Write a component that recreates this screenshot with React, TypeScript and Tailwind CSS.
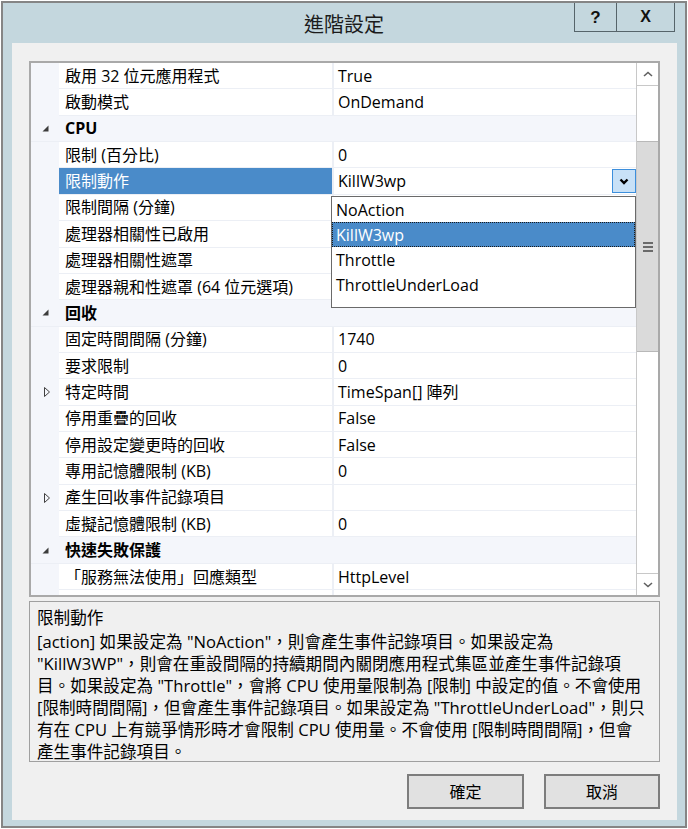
import React from "react";

type Row = {
  k: "cat" | "prop";
  name: string;
  value?: string;
  exp?: boolean;
  sel?: boolean;
};

const rows: Row[] = [
  { k: "prop", name: "啟用 32 位元應用程式", value: "True" },
  { k: "prop", name: "啟動模式", value: "OnDemand" },
  { k: "cat", name: "CPU" },
  { k: "prop", name: "限制 (百分比)", value: "0" },
  { k: "prop", name: "限制動作", value: "KillW3wp", sel: true },
  { k: "prop", name: "限制間隔 (分鐘)", value: "" },
  { k: "prop", name: "處理器相關性已啟用", value: "" },
  { k: "prop", name: "處理器相關性遮罩", value: "" },
  { k: "prop", name: "處理器親和性遮罩 (64 位元選項)", value: "" },
  { k: "cat", name: "回收" },
  { k: "prop", name: "固定時間間隔 (分鐘)", value: "1740" },
  { k: "prop", name: "要求限制", value: "0" },
  { k: "prop", name: "特定時間", value: "TimeSpan[] 陣列", exp: true },
  { k: "prop", name: "停用重疊的回收", value: "False" },
  { k: "prop", name: "停用設定變更時的回收", value: "False" },
  { k: "prop", name: "專用記憶體限制 (KB)", value: "0" },
  { k: "prop", name: "產生回收事件記錄項目", value: "", exp: true },
  { k: "prop", name: "虛擬記憶體限制 (KB)", value: "0" },
  { k: "cat", name: "快速失敗保護" },
  { k: "prop", name: "「服務無法使用」回應類型", value: "HttpLevel" },
  { k: "prop", name: "已啟用", value: "" },
];

function CatArrow() {
  return (
    <svg width="7" height="7" viewBox="0 0 7 7" className="block">
      <polygon points="6.5,0.5 6.5,6.5 0.5,6.5" fill="#3c3c3c" />
    </svg>
  );
}

function ExpArrow() {
  return (
    <svg width="6" height="10" viewBox="0 0 6 10" className="block">
      <polygon points="0.5,0.5 5.5,5 0.5,9.5" fill="none" stroke="#404040" strokeWidth="1" />
    </svg>
  );
}

function GridRow({ r }: { r: Row }) {
  if (r.k === "cat") {
    return (
      <div className="flex h-[26.37px] shrink-0 items-center bg-[#f4f6fb] border-b border-[#eceff5]">
        <div className="flex w-[28px] shrink-0 justify-end pr-[10px]">
          <CatArrow />
        </div>
        <div className="pl-[6px] font-bold text-black">{r.name}</div>
      </div>
    );
  }
  return (
    <div className="flex h-[26.37px] shrink-0">
      <div className="flex w-[28px] shrink-0 items-center justify-end bg-[#f4f6fb] pr-[9px]">
        {r.exp ? <ExpArrow /> : null}
      </div>
      <div
        className={
          r.sel
            ? "flex w-[273px] shrink-0 items-center border-b border-[#eceff5] bg-[#4a8bc9] pl-[6px] text-white whitespace-nowrap"
            : "flex w-[273px] shrink-0 items-center border-b border-[#eceff5] bg-white pl-[6px] text-black whitespace-nowrap"
        }
      >
        {r.name}
      </div>
      <div className="flex flex-1 items-center border-b border-l-2 border-[#eceff5] bg-white pl-[4px] text-black whitespace-nowrap">
        <span className="flex-1">{r.value}</span>
        {r.sel ? (
          <div className="mr-0 flex h-[24px] w-[24px] items-center justify-center border border-[#3d8fdc] bg-[#c8e1f7]">
            <svg width="10" height="7" viewBox="0 0 10 7">
              <polyline points="1.5,1.5 5,5 8.5,1.5" fill="none" stroke="#000" strokeWidth="2.4" />
            </svg>
          </div>
        ) : null}
      </div>
    </div>
  );
}

function Dropdown() {
  const items = ["NoAction", "KillW3wp", "Throttle", "ThrottleUnderLoad"];
  return (
    <div className="absolute left-[300px] top-[133px] h-[112px] w-[305px] border border-[#6a6a6a] bg-white">
      {items.map((it) =>
        it === "KillW3wp" ? (
          <div
            key={it}
            className="flex h-[25px] items-center border border-dotted border-[#1a1a1a] bg-[#4a8bc9] pl-[3px] text-white"
          >
            {it}
          </div>
        ) : (
          <div key={it} className="flex h-[25px] items-center pl-[4px] text-black">
            {it}
          </div>
        )
      )}
    </div>
  );
}

function Scrollbar() {
  return (
    <div className="flex w-[22px] shrink-0 flex-col border-l border-[#c8c8c8] bg-white">
      <div className="flex h-[23px] shrink-0 items-center justify-center border-b border-[#c8c8c8]">
        <svg width="10" height="6" viewBox="0 0 10 6">
          <polyline points="1,5 5,1.5 9,5" fill="none" stroke="#606060" strokeWidth="1.6" />
        </svg>
      </div>
      <div className="h-[55px] shrink-0" />
      <div className="flex h-[211px] shrink-0 flex-col items-center justify-center gap-[2px] border-y border-[#b8b8b8] bg-[#dadada]">
        <div className="h-[2px] w-[10px] bg-[#6a6a6a]" />
        <div className="h-[2px] w-[10px] bg-[#6a6a6a]" />
        <div className="h-[2px] w-[10px] bg-[#6a6a6a]" />
      </div>
      <div className="flex-1" />
      <div className="flex h-[22px] shrink-0 items-center justify-center border-t border-[#c8c8c8]">
        <svg width="10" height="6" viewBox="0 0 10 6">
          <polyline points="1,1 5,4.5 9,1" fill="none" stroke="#606060" strokeWidth="1.6" />
        </svg>
      </div>
    </div>
  );
}

export default function App() {
  return (
    <div className="h-[829px] w-[688px] bg-white p-[1px] font-['Open_Sans','Noto_Sans_CJK_TC',sans-serif] text-[16px] leading-none">
      <div className="flex h-full flex-col border-2 border-[#858585] bg-[#c4d7de]">
        <div className="relative flex h-[40px] shrink-0 items-center justify-center">
          <span className="pt-[1px] font-['Noto_Sans_CJK_TC',sans-serif] text-[20px] text-[#1b1b1b]">進階設定</span>
          <div className="absolute right-[10px] top-0 flex h-[29px] border-x border-b border-[#56646a]">
            <div className="flex w-[42px] items-center justify-center border-r border-[#56646a] font-['Liberation_Sans',sans-serif] text-[17px] font-bold text-[#111]">
              ?
            </div>
            <div className="flex w-[57px] items-center justify-center font-['Liberation_Sans',sans-serif] text-[16px] font-bold text-[#111]">
              X
            </div>
          </div>
        </div>
        <div className="mb-[6px] ml-[9px] mr-[8px] flex flex-1 flex-col bg-[#f0f0f0] pl-[17px] pr-[17px] pt-[18px]">
          <div className="flex h-[536px] shrink-0 border-2 border-[#a9a9a9] bg-white">
            <div className="relative flex flex-1 flex-col overflow-hidden">
              {rows.map((r, i) => (
                <GridRow key={i} r={r} />
              ))}
              <Dropdown />
            </div>
            <Scrollbar />
          </div>
          <div className="mt-[4px] h-[161px] shrink-0 border border-[#a0a0a0] px-[7px] pt-[5px] text-[16.6px] text-black">
            <div className="h-[24px] leading-[22px]">限制動作</div>
            <div className="whitespace-nowrap leading-[22px]">
              [action] 如果設定為 "NoAction"，則會產生事件記錄項目。如果設定為
              <br />
              "KillW3WP"，則會在重設間隔的持續期間內關閉應用程式集區並產生事件記錄項
              <br />
              目。如果設定為 "Throttle"，會將 CPU 使用量限制為 [限制] 中設定的值。不會使用
              <br />
              [限制時間間隔]，但會產生事件記錄項目。如果設定為 "ThrottleUnderLoad"，則只
              <br />
              有在 CPU 上有競爭情形時才會限制 CPU 使用量。不會使用 [限制時間間隔]，但會
              <br />
              產生事件記錄項目。
            </div>
          </div>
          <div className="mt-[12px] flex justify-end gap-[20px]">
            <div className="flex h-[35px] w-[117px] items-center justify-center border-2 border-[#7d7d7d] bg-[#e1e1e1] text-black">
              確定
            </div>
            <div className="flex h-[35px] w-[116px] items-center justify-center border-2 border-[#7d7d7d] bg-[#e1e1e1] text-black">
              取消
            </div>
          </div>
        </div>
      </div>
    </div>
  );
}
